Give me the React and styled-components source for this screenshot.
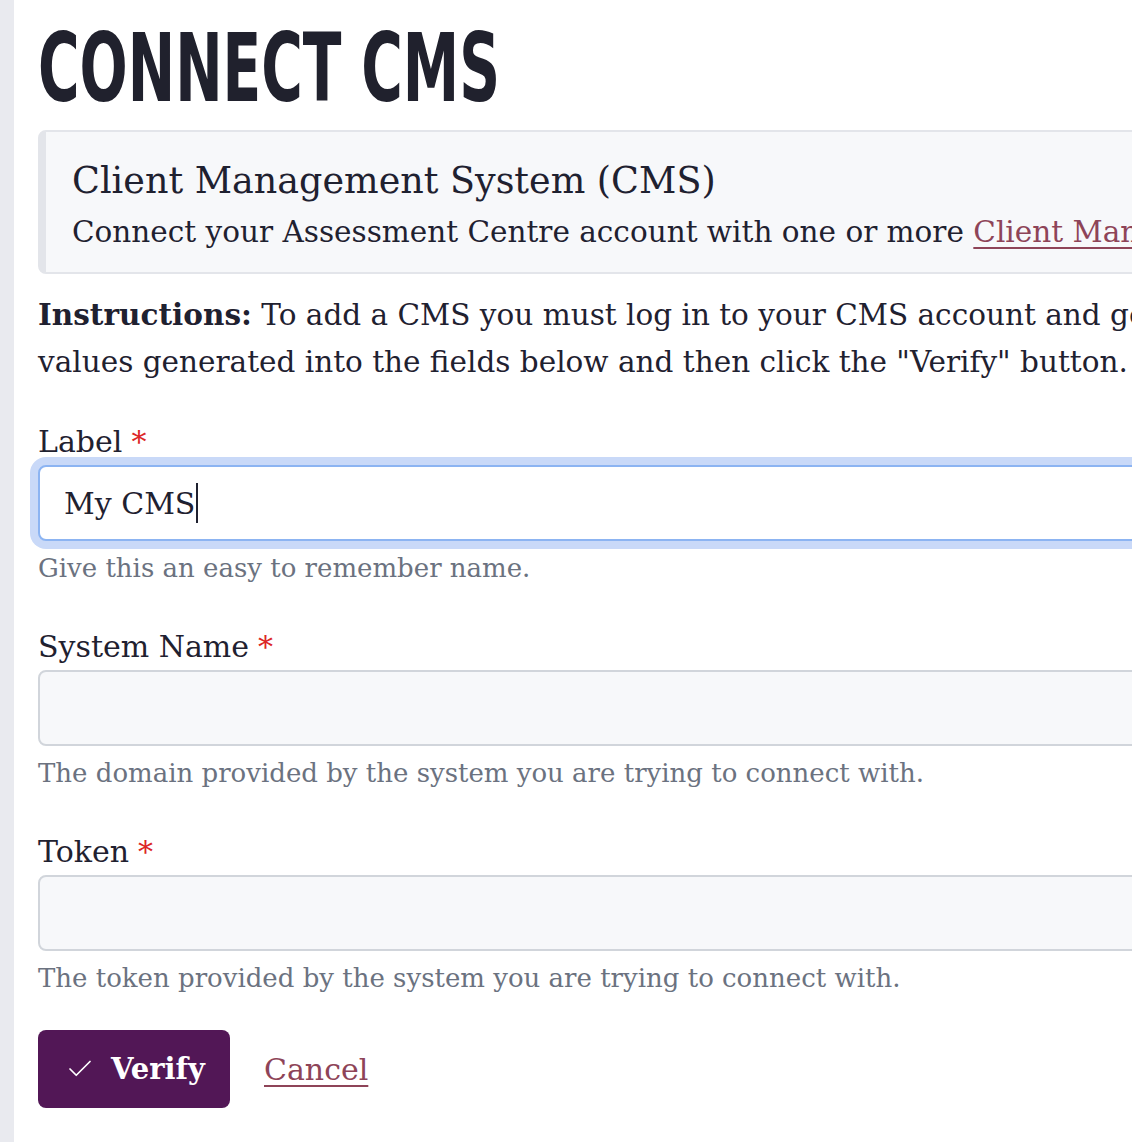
import React from 'react';
import styled, { createGlobalStyle } from 'styled-components';
import { Check } from 'lucide-react';

const GlobalStyle = createGlobalStyle`
  html, body {
    margin: 0;
    padding: 0;
    height: 100%;
    background: #ffffff;
    overflow: hidden;
  }
  #root {
    height: 100%;
  }
`;

const Page = styled.div`
  display: flex;
  height: 100%;
  width: 1500px;
`;

const SideStrip = styled.div`
  width: 14px;
  flex-shrink: 0;
  background: #e9eaef;
`;

const Main = styled.main`
  flex: 1;
  padding: 22px 0 0 24px;
  font-family: "DejaVu Serif", serif;
  color: #1f2130;
`;

const Title = styled.h1`
  margin: 0;
  font-family: "DejaVu Sans Condensed", "DejaVu Sans", sans-serif;
  font-stretch: condensed;
  font-weight: 700;
  font-size: 94px;
  line-height: 1;
  color: #20212d;
  display: inline-block;
  transform: scaleX(0.67);
  transform-origin: left center;
`;

const Callout = styled.section`
  margin-top: 14px;
  background: #f7f8fa;
  border: 2px solid #e3e5ea;
  border-left-width: 8px;
  border-radius: 8px;
  padding: 23px 0 16px 26px;
  white-space: nowrap;
`;

const CalloutTitle = styled.h2`
  margin: 0;
  font-size: 36.5px;
  font-weight: 400;
  line-height: 1.4;
`;

const CalloutText = styled.p`
  margin: 3px 0 0;
  font-size: 29.5px;
  line-height: 1.6;
`;

const Link = styled.a`
  color: #8e4458;
  text-decoration: underline;
  text-underline-offset: 5px;
  text-decoration-thickness: 2px;
`;

const Instructions = styled.p`
  margin: 17px 0 0;
  font-size: 29.5px;
  line-height: 47px;
  white-space: nowrap;

  strong {
    font-weight: 700;
  }
`;

const Form = styled.form`
  margin-top: 33px;
  display: flex;
  flex-direction: column;
  gap: 36px;
`;

const Field = styled.div`
  display: flex;
  flex-direction: column;
`;

const Label = styled.label`
  font-size: 30px;
  line-height: 45px;
  margin-bottom: 1px;
`;

const Required = styled.span`
  color: #dc2626;
  margin-left: 9px;
`;

const Input = styled.div`
  box-sizing: border-box;
  height: 76px;
  border: 2px solid ${(p) => (p.focused ? '#8cb4f2' : '#d1d5db')};
  background: ${(p) => (p.focused ? '#ffffff' : '#f7f8fa')};
  border-radius: 8px;
  box-shadow: ${(p) => (p.focused ? '0 0 0 8px #c9d9f8' : 'none')};
  padding: 0 24px;
  display: flex;
  align-items: center;
  font-size: 30px;
`;

const Caret = styled.span`
  display: inline-block;
  width: 2px;
  height: 40px;
  background: #1f2130;
  margin-left: 1px;
`;

const Help = styled.div`
  margin-top: 8px;
  font-size: 26px;
  line-height: 39px;
  color: #6b7280;
`;

const Actions = styled.div`
  display: flex;
  align-items: center;
  gap: 34px;
  margin-top: -4px;
`;

const VerifyButton = styled.button`
  box-sizing: border-box;
  height: 78px;
  width: 192px;
  display: flex;
  align-items: center;
  gap: 16px;
  padding: 0 0 0 27px;
  border: none;
  border-radius: 8px;
  background: #521756;
  color: #ffffff;
  font-family: inherit;
  font-weight: 700;
  font-size: 29px;
`;

const CancelLink = styled(Link)`
  font-size: 30px;
`;

const fields = [
  { label: 'Label', value: 'My CMS', focused: true, help: 'Give this an easy to remember name.' },
  { label: 'System Name', value: '', help: 'The domain provided by the system you are trying to connect with.' },
  { label: 'Token', value: '', help: 'The token provided by the system you are trying to connect with.' },
];

export default function App() {
  return (
    <>
      <GlobalStyle />
      <Page>
        <SideStrip />
        <Main>
          <Title>CONNECT CMS</Title>
          <Callout>
            <CalloutTitle>Client Management System (CMS)</CalloutTitle>
            <CalloutText>
              Connect your Assessment Centre account with one or more{' '}
              <Link href="#">Client Management Systems</Link>.
            </CalloutText>
          </Callout>
          <Instructions>
            <strong>Instructions:</strong> To add a CMS you must log in to your CMS account and generate a token. Copy the
            <br />
            values generated into the fields below and then click the "Verify" button.
          </Instructions>
          <Form onSubmit={(e) => e.preventDefault()}>
            {fields.map((f) => (
              <Field key={f.label}>
                <Label>
                  {f.label}
                  <Required>*</Required>
                </Label>
                <Input focused={f.focused}>
                  {f.value}
                  {f.focused && <Caret />}
                </Input>
                <Help>{f.help}</Help>
              </Field>
            ))}
            <Actions>
              <VerifyButton type="submit">
                <Check size={30} strokeWidth={1.4} />
                Verify
              </VerifyButton>
              <CancelLink href="#">Cancel</CancelLink>
            </Actions>
          </Form>
        </Main>
      </Page>
    </>
  );
}
